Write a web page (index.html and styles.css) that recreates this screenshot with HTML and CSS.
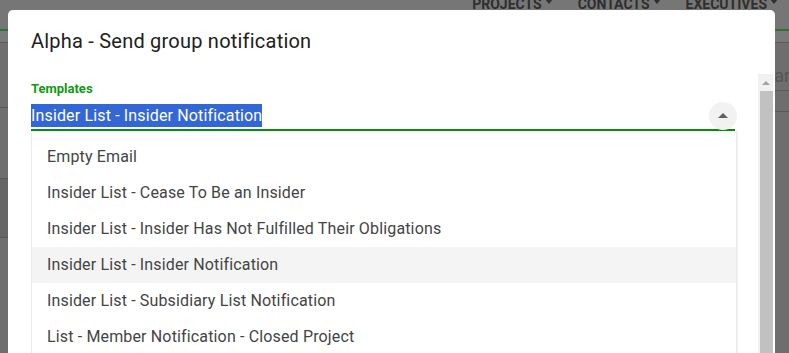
FILE: index.html
```html
<!DOCTYPE html>
<html lang="en">

<head>
  <meta charset="UTF-8">
  <title>Alpha - Send group notification</title>
  <link rel="stylesheet" href="styles.css">
</head>

<body>
  <!-- Page behind the dialog (dimmed) -->
  <div class="page">
    <div class="topbar">
      <nav class="nav">
        <span class="nav-item">Projects<i class="caret"></i></span>
        <span class="nav-item">Contacts<i class="caret"></i></span>
        <span class="nav-item">Executives<i class="caret"></i></span>
      </nav>
    </div>
    <div class="subbar"></div>
    <div class="content">
      <div class="side-col">
        <div class="side-row r1"></div>
        <div class="side-row r2"></div>
        <div class="side-row r3"></div>
      </div>
      <div class="search-col">
        <div class="search">Search</div>
        <div class="search-line"></div>
      </div>
    </div>
  </div>

  <!-- Dialog -->
  <div class="modal">
    <h2 class="modal-title">Alpha - Send group notification</h2>
    <div class="modal-body">
      <div class="form">
        <label class="field-label">Templates</label>
        <div class="select">
          <span class="select-value">Insider List - Insider Notification</span>
          <span class="select-toggle"><i class="arrow-up"></i></span>
        </div>
        <ul class="options">
          <li>Empty Email</li>
          <li>Insider List - Cease To Be an Insider</li>
          <li>Insider List - Insider Has Not Fulfilled Their Obligations</li>
          <li class="active">Insider List - Insider Notification</li>
          <li>Insider List - Subsidiary List Notification</li>
          <li>List - Member Notification - Closed Project</li>
          <li>List - Member Notification - New Member</li>
        </ul>
      </div>
      <div class="scrollbar">
        <div class="scroll-btn"><i class="scroll-arrow"></i></div>
        <div class="scroll-thumb"></div>
      </div>
    </div>
  </div>
</body>

</html>
```

FILE: styles.css
```css
body {
  margin: 0;
  padding: 0;
  font-family: Roboto, "Liberation Sans", sans-serif;
  background-color: #6e6e6e;
  overflow: hidden;
  height: 353px;
}

/* Page behind the overlay */
.page {
  width: 789px;
}

.topbar {
  height: 29px;
  background-color: #767676;
  display: flex;
  justify-content: flex-end;
  align-items: flex-start;
  overflow: hidden;
  border-bottom: 2px solid #2f7336;
}

.nav {
  display: flex;
  gap: 25px;
  margin-top: -4px;
  padding-right: 11px;
}

.nav-item {
  font-size: 14px;
  font-weight: 700;
  text-transform: uppercase;
  color: #2f2f2f;
  line-height: 17px;
  display: flex;
  align-items: center;
}

.caret {
  display: inline-block;
  margin-left: 3px;
  border-left: 4px solid transparent;
  border-right: 4px solid transparent;
  border-top: 5px solid #2f2f2f;
  margin-top: -6px;
}

.subbar {
  height: 11px;
  background-color: #7a7a7a;
  border-bottom: 1px solid #5c5c5c;
}

.content {
  display: flex;
  justify-content: space-between;
}

.side-col {
  width: 8px;
  padding-top: 64px;
}

.side-row {
  border-top: 1px solid #575757;
}

.r1 {
  height: 70px;
}

.r2 {
  height: 58px;
  background-color: #666;
}

.search-col {
  width: 14px;
  padding-top: 21px;
  overflow: hidden;
}

.search {
  font-size: 18px;
  color: #555;
  margin-left: -21px;
  line-height: 24px;
  border-bottom: 1px solid #595959;
  padding-bottom: 2px;
  white-space: nowrap;
}

.search-line {
  height: 20px;
  border-bottom: 1px solid #595959;
}

/* Dialog */
.modal {
  position: absolute;
  left: 8px;
  top: 10px;
  width: 767px;
  height: 343px;
  overflow: hidden;
  background-color: #fff;
  border-radius: 5px 5px 0 0;
  display: flex;
  flex-direction: column;
}

.modal-title {
  flex: none;
  margin: 0;
  padding: 19px 23px 0;
  height: 64px;
  box-sizing: border-box;
  font-size: 20px;
  font-weight: 400;
  line-height: 24px;
  letter-spacing: 0.22px;
  color: #212121;
}

.modal-body {
  display: flex;
  flex: 1;
  min-height: 0;
}

.form {
  flex: 1;
  padding: 8px 23px 0;
}

.field-label {
  display: block;
  font-size: 13px;
  font-weight: 700;
  line-height: 14px;
  color: #0f9a0f;
}

.select {
  margin-top: 8px;
  display: flex;
  justify-content: space-between;
  align-items: flex-start;
  padding-bottom: 2px;
  border-bottom: 2px solid #0a910a;
}

.select-value {
  display: inline-block;
  height: 23px;
  line-height: 23px;
  font-size: 16px;
  letter-spacing: 0.15px;
  color: #fff;
  background-color: #3367d6;
}

.select-toggle {
  width: 28px;
  height: 28px;
  margin: -2px -2px -3px 0;
  border-radius: 50%;
  background-color: #f2f2f2;
  display: flex;
  align-items: center;
  justify-content: center;
}

.arrow-up {
  display: block;
  border-left: 5px solid transparent;
  border-right: 5px solid transparent;
  border-bottom: 5px solid #616161;
  margin-top: -1px;
}

.options {
  list-style: none;
  margin: 0 -1px 0 0;
  padding: 8px 0 0;
  border-left: 1px solid #ececec;
  box-shadow: 1px 0 2px rgba(0, 0, 0, 0.12);
}

.options li {
  height: 36px;
  line-height: 36px;
  padding-left: 15px;
  font-size: 16px;
  letter-spacing: 0.15px;
  color: #444;
  white-space: nowrap;
}

.options li.active {
  background-color: #f4f4f4;
}

/* Scrollbar */
.scrollbar {
  width: 15px;
  margin-right: 2px;
  background-color: #f1f1f1;
  display: flex;
  flex-direction: column;
  align-items: flex-end;
}

.scroll-btn {
  width: 15px;
  height: 17px;
  display: flex;
  align-items: center;
  justify-content: center;
}

.scroll-arrow {
  display: block;
  border-left: 4px solid transparent;
  border-right: 4px solid transparent;
  border-bottom: 4px solid #a3a3a3;
}

.scroll-thumb {
  width: 13px;
  flex: 1;
  background-color: #c1c1c1;
}
```
